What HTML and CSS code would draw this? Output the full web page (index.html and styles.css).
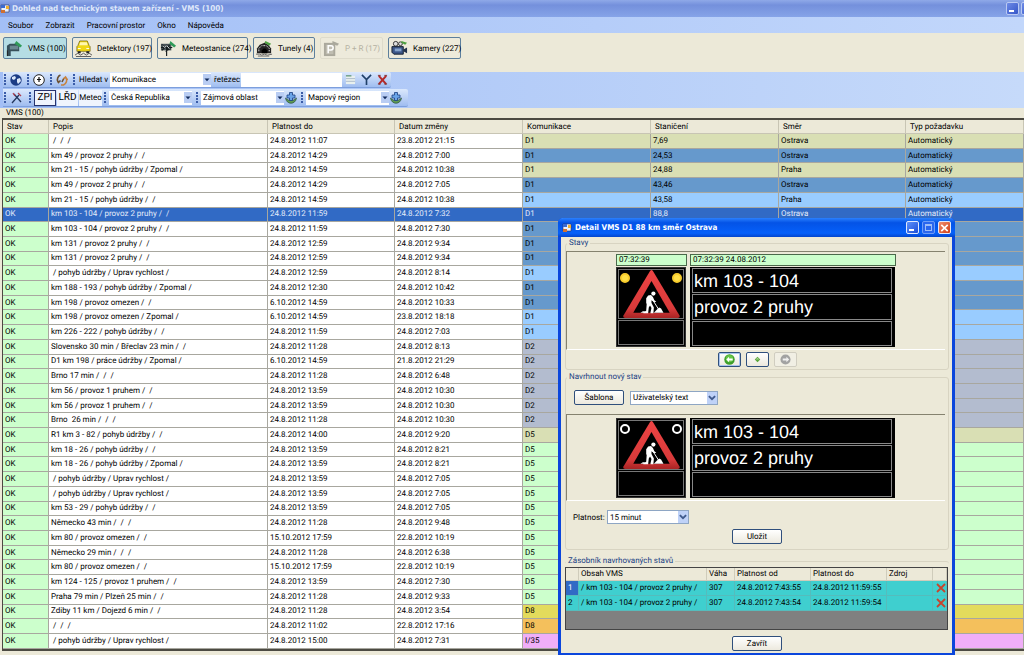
FILE: index.html
```html
<!DOCTYPE html>
<html lang="cs">
<head>
<meta charset="utf-8">
<title>Dohled nad technickým stavem zařízení - VMS (100)</title>
<link rel="stylesheet" href="styles.css">
</head>
<body>
<svg class="defs" aria-hidden="true">
  <defs>
    <linearGradient id="red" x1="0" y1="0" x2="0" y2="1"><stop offset="0" stop-color="#ee4444"/><stop offset=".8" stop-color="#d83a3a"/><stop offset="1" stop-color="#a82424"/></linearGradient>
  </defs>
  <symbol id="form" viewBox="0 0 10 10"><path fill="#e8f0ff" stroke="#335" stroke-width=".6" d="M1 1h8v7H1z"/><path fill="#3a6ad0" d="M1 1h4v3H1z"/><path fill="#f0b030" d="M6 2h3v3H6z"/><path fill="#d07030" d="M1 6h4v3H1z"/></symbol>
  <symbol id="down" viewBox="0 0 8 8"><path d="M1.500 3h5L4 5.800z" fill="#112a5c"/></symbol>
  <symbol id="chev" viewBox="0 0 8 8"><path d="M1.500 2.500 4 5l2.500-2.500" fill="none" stroke="#3f5a8c" stroke-width="1.500"/></symbol>
  <symbol id="works" viewBox="0 0 66 50">
    <path fill="url(#red)" d="M32 1q1.500-2 3 0l28 47q0 2-2 2H6q-2 0-2-2z"/><path fill="#000" d="M33.500 11.500 52.500 44.500H14.500z"/>
    <circle cx="35.500" cy="24.500" r="2.200" fill="#fff"/>
    <path fill="#fff" d="M33 26l-3 .5-2 3v5l.5 1-.5 7-3 1.500v1h5l.7-6 1.300-2 1.500 2.500-1 4.500v1h3l.5-6-2.500-4.500v-3l3 2 2-.500-2-1.500-1.500-3.500z"/>
    <path d="M34 30 41 41" stroke="#fff"/><path fill="#fff" d="M36 44.500l3-3 2.500-2.500 2 1 2.500 4.500zM22 44.500l2.500-1.500h2v1.500z"/>
  </symbol>
  <symbol id="plus" viewBox="0 0 12 12"><circle cx="6" cy="6" r="5.700" fill="#3e9f2c"/><circle cx="6" cy="5" r="4" fill="#68c648"/><path d="M2.500 6 5.500 3v2h4v2h-4v2z" fill="#fff"/></symbol>
  <symbol id="fwd" viewBox="0 0 12 12"><circle cx="6" cy="6" r="5.500" fill="#a2a2a2"/><path d="M10 6 7 3v2H3v2h4v2z" fill="#f0f0f0"/></symbol>
  <symbol id="dot" viewBox="0 0 12 12"><path d="M6 3 9 6 6 9 3 6z" fill="#5aa63a"/><path d="M6 4 8 6H4z" fill="#a8d490"/></symbol>
  <symbol id="cross" viewBox="0 0 12 12"><path d="M2 2l8 8M10 2 2 10" stroke="#c8442c" stroke-width="1.800"/></symbol>
  <symbol id="add" viewBox="0 0 12 12"><path d="M.5 6c1 7 10 7 11 0L9 8H3z" fill="#5f9a55" stroke="#28503c" stroke-width=".7"/><path d="M4.500.5h3V3H10v3H7.500v2.500h-3V6H2V3h2.500z" fill="#6aa4e8" stroke="#1a3f80" stroke-width=".8"/></symbol>
</svg>

<header class="titlebar">
  <svg class="i9"><use href="#form"/></svg>
  <h1>Dohled nad technickým stavem zařízení - VMS (100)</h1>
  <button class="win" aria-label="Minimalizovat"><i class="min"></i></button>
  <button class="win cut" aria-label="Maximalizovat"></button>
</header>
<nav class="menu">
  <button>Soubor</button><button>Zobrazit</button><button>Pracovní prostor</button><button>Okno</button><button>Nápověda</button>
</nav>

<div class="modules">
  <button class="mod w1 on"><svg viewBox="0 0 18 18"><path d="M1 6l3-2h10v8H5v5H1z" fill="#37505a"/><path d="M4 6h9v4H4z" fill="#6a8790"/><path d="M11 1l6 5-2 2-6-4z" fill="#2f9a58"/><path d="M1.500 11v6" stroke="#222"/></svg>VMS (100)</button>
  <button class="mod w2"><svg viewBox="0 0 18 18"><path d="M5 1h8l2 5 1 1v5H2V7l1-1z" fill="#f0d818" stroke="#665800" stroke-width=".7"/><path d="M5.500 2.500h7l1 3h-9z" fill="#fff7b0"/><path d="M3 9h3M12 9h3" stroke="#fff"/><path d="M3 12h3v2H3zM12 12h3v2h-3z" fill="#222"/><path d="M0 16l3-2 3 2 3-2 3 2 3-2 3 2M1 17.500h16" stroke="#555" fill="none"/></svg>Detektory (197)</button>
  <button class="mod w3"><svg viewBox="0 0 18 18"><path d="M1 4h11v7H1z" fill="#4a5558"/><path d="M2 5l3 3-3 3m5-6v12m3-12-3 6 4-2M1 8h12" stroke="#151c1e" fill="none" stroke-width="1.200"/><path d="M3 6l2 2 2-2 3 3" stroke="#dfe6e8" fill="none"/><path d="M11 1l6 5-2 2-5-4z" fill="#2f9a58"/></svg>Meteostanice (274)</button>
  <button class="mod w4"><svg viewBox="0 0 18 18"><path d="M1 14V9l3-4 5-2 4 2 3 4v5z" fill="#222"/><path d="M3 12V9l3-3h5l3 3v3" stroke="#ddd" fill="none" stroke-dasharray="2 1"/><path d="M6 14v-3l2-2h2l2 2v3z" fill="#000"/><path d="M0 15h4l2 1 3-1 3 1 5-1M2 17h12" stroke="#666" fill="none"/><path d="M10 1l6 3-2 2-5-3z" fill="#4da040"/></svg>Tunely (4)</button>
  <button class="mod w5" disabled><svg viewBox="0 0 18 18"><path d="M1 3h12v14H1z" fill="#aaa89c"/><path d="M3 5h8v10H3z" fill="#bfbdb1"/><path d="M5.500 14V6h3a2 2 0 0 1 0 4.500h-3" stroke="#fff" stroke-width="1.600" fill="none"/><path d="M10 1l7 3-2 2-5-2z" fill="#aaa89c"/></svg>P + R (17)</button>
  <button class="mod w6"><svg viewBox="0 0 18 18"><circle cx="5" cy="4" r="2.500" fill="#ddd" stroke="#333"/><circle cx="10" cy="4" r="2" fill="#ddd" stroke="#333"/><path d="M1 7h12v8H3l-2-2z" fill="#3c5688" stroke="#16202e"/><path d="M4 9h7v3H4z" fill="#86a4cc"/><path d="M13 10l4-2v6l-4-2z" fill="#24344e"/><path d="M11 1l6 2-2 2-4-2z" fill="#4da040"/></svg>Kamery (227)</button>
</div>

<div class="strips">
  <div class="strip s1">
    <span class="grip"></span>
    <button class="tool t1" aria-label="Mapa"><svg viewBox="0 0 12 12"><circle cx="6" cy="6" r="5.700" fill="#1c3c84"/><path d="M2 3l3-1 1 2-2 2-2-1zM7 5l3-1 1 3-3 3-1-2z" fill="#dbe7f8"/></svg></button>
    <span class="grip"></span>
    <button class="tool t1" aria-label="Obnovit čas"><svg viewBox="0 0 12 12"><circle cx="6" cy="6" r="5.300" fill="#fff" stroke="#222"/><path d="M6 3v5M4 5.500h4" stroke="#111" stroke-width="1.200"/></svg></button>
    <span class="grip"></span>
    <button class="tool t1" aria-label="Obnovit"><svg viewBox="0 0 12 12"><path d="M4.500 1A5 5 0 0 0 2 8M1 5.500l1.500 3 2-2M6 8l2-4" stroke="#6c5030" stroke-width="1.600" fill="none"/><path d="M7.500 11A5 5 0 0 0 10 4M11.500 6 9.500 3l-2 2M5 11H8" stroke="#c8823c" stroke-width="1.600" fill="none"/></svg></button>
    <span class="grip"></span>
    <label for="kde">Hledat v</label>
    <span class="combo c1"><select id="kde"><option>Komunikace</option></select><svg><use href="#down"/></svg></span>
    <label for="str">řetězec</label>
    <input id="str" class="find" type="text">
    <button class="tool t2" aria-label="Seznam"><svg viewBox="0 0 12 12"><path d="M1 2h10v9H1z" fill="#e8f0ee"/><path d="M1 2h6" stroke="#6a9a80" stroke-width="1.500"/><path d="M1 5h10M1 8h10" stroke="#a8b8c8"/></svg></button>
    <button class="tool t2" aria-label="Filtr"><svg viewBox="0 0 12 12"><path d="M1 1l5 5 5-5M6 6v6" stroke="#1f3f68" stroke-width="1.800" fill="none"/></svg></button>
    <button class="tool t2" aria-label="Zrušit filtr"><svg viewBox="0 0 12 12"><path d="M2 2l8 9M10 2 2 11" stroke="#b42a2a" stroke-width="2.200"/><path d="M1 1.500h3M8 1.500h3M1 11h3M8 11h3" stroke="#7a3030"/></svg></button>
  </div>
  <div class="strip s2">
    <span class="grip"></span>
    <button class="tool t3" aria-label="Nástroje"><svg viewBox="0 0 12 12"><path d="M1 11 8 3M3 2l7 8" stroke="#23365e" stroke-width="1.300"/><path d="M7 1l3 3M2 1l2 3" stroke="#b04050" stroke-width="1.300"/></svg></button>
    <span class="grip"></span>
    <button class="seg zpi">ZPI</button><button class="seg">LŘD</button><button class="seg small">Meteo</button>
    <span class="grip"></span>
    <span class="combo c2"><select aria-label="Stát"><option>Česká Republika</option></select><svg><use href="#down"/></svg></span>
    <span class="grip"></span>
    <span class="combo c3"><select aria-label="Zájmová oblast"><option>Zájmová oblast</option></select><svg><use href="#down"/></svg></span>
    <button class="tool t4" aria-label="Přidat oblast"><svg><use href="#add"/></svg></button>
    <span class="grip"></span>
    <span class="combo c3"><select aria-label="Mapový region"><option>Mapový region</option></select><svg><use href="#down"/></svg></span>
    <button class="tool t4" aria-label="Přidat region"><svg><use href="#add"/></svg></button>
  </div>
</div>

<main class="list">
  <h2>VMS (100)</h2>
  <div class="frame">
    <table class="vms">
      <colgroup><col class="k0"><col class="k1"><col class="k2"><col class="k3"><col class="k3"><col class="k3"><col class="k2"><col></colgroup>
      <thead><tr><th>Stav</th><th>Popis</th><th>Platnost do</th><th>Datum změny</th><th>Komunikace</th><th>Staničení</th><th>Směr</th><th>Typ požadavku</th></tr></thead>
      <tbody id="rows"></tbody>
    </table>
  </div>
</main>

<section class="dialog" role="dialog" aria-labelledby="dt">
  <header class="dtitle">
    <svg class="i9"><use href="#form"/></svg>
    <h2 id="dt">Detail VMS D1 88 km směr Ostrava</h2>
    <button class="win" aria-label="Minimalizovat"><i class="min"></i></button>
    <button class="win dim" aria-label="Maximalizovat"><i class="max"></i></button>
    <button class="win close" aria-label="Zavřít okno"><svg viewBox="0 0 12 12"><path d="M2.500 2.500l7 7M9.500 2.500l-7 7" stroke="#fff" stroke-width="1.800"/></svg></button>
  </header>
  <div class="dbody">
    <fieldset class="g1">
      <legend>Stavy</legend>
      <div class="panel">
        <div class="stamps"><span>07:32:39</span><span>07:32:39 24.08.2012</span></div>
        <div class="signs">
          <div class="sign"><div class="pic"><svg><use href="#works"/></svg><i class="lamp lit"></i><i class="lamp lit"></i></div><div class="blank"></div></div>
          <div class="board"><p>km 103 - 104</p><p>provoz 2 pruhy</p><p></p></div>
        </div>
      </div>
      <div class="acts">
        <button class="xp focus" aria-label="Předchozí"><svg><use href="#plus"/></svg></button>
        <button class="xp" aria-label="Převzít"><svg><use href="#dot"/></svg></button>
        <button class="xp" disabled aria-label="Další"><svg><use href="#fwd"/></svg></button>
      </div>
    </fieldset>
    <fieldset class="g2">
      <legend>Navrhnout nový stav</legend>
      <div class="line">
        <button class="xp wide">Šablona</button>
        <span class="combo xpc"><select aria-label="Typ textu"><option>Uživatelský text</option></select><svg><use href="#chev"/></svg></span>
      </div>
      <div class="panel">
        <div class="signs">
          <div class="sign"><div class="pic"><svg><use href="#works"/></svg><i class="lamp"></i><i class="lamp"></i></div><div class="blank"></div></div>
          <div class="board"><p>km 103 - 104</p><p>provoz 2 pruhy</p><p></p></div>
        </div>
      </div>
      <div class="line valid">
        <label for="plat">Platnost:</label>
        <span class="combo xpc short"><select id="plat"><option>15 minut</option></select><svg><use href="#chev"/></svg></span>
      </div>
      <div class="center"><button class="xp wide">Uložit</button></div>
    </fieldset>
    <fieldset class="g3">
      <legend>Zásobník navrhovaných stavů</legend>
      <div class="stack">
        <table>
          <colgroup><col class="q0"><col class="q1"><col class="q2"><col class="q3"><col class="q3"><col class="q4"><col></colgroup>
          <thead><tr><th></th><th>Obsah VMS</th><th>Váha</th><th>Platnost od</th><th>Platnost do</th><th>Zdroj</th><th></th></tr></thead>
          <tbody>
            <tr><td class="cur">1</td><td>/ km 103 - 104 / provoz 2 pruhy /</td><td>307</td><td>24.8.2012 7:43:55</td><td>24.8.2012 11:59:55</td><td></td><td><button class="del" aria-label="Smazat 1"><svg><use href="#cross"/></svg></button></td></tr>
            <tr><td>2</td><td>/ km 103 - 104 / provoz 2 pruhy /</td><td>307</td><td>24.8.2012 7:43:54</td><td>24.8.2012 11:59:54</td><td></td><td><button class="del" aria-label="Smazat 2"><svg><use href="#cross"/></svg></button></td></tr>
          </tbody>
        </table>
      </div>
    </fieldset>
    <div class="center"><button class="xp wide">Zavřít</button></div>
  </div>
</section>
<script src="app.js"></script>
</body>
</html>
```

FILE: styles.css
```css
* { box-sizing: border-box; }
body, button, input, select, legend, label, th, td {
  font-family: Roboto, "Liberation Sans", Arial, sans-serif;
  font-size: 8px;
  color: #000;
  text-rendering: geometricPrecision;
}
body { margin: 0; height: 100vh; overflow: hidden; display: flex; flex-direction: column; background: #ece9d8; position: relative; }
h1, h2, p { margin: 0; }
button { margin: 0; padding: 0; border: 0; background: none; display: flex; align-items: center; justify-content: center; }
.defs { position: absolute; width: 0; height: 0; }
.i9 { width: 10px; height: 10px; flex: none; }

.titlebar { height: 17px; flex: none; display: flex; align-items: center; background: linear-gradient(#8fa9e8, #7490dc 30%, #86a4e8); overflow: hidden; }
.titlebar h1, .dtitle h2 { flex: 1; font: bold 8px/12px "DejaVu Sans Condensed", "DejaVu Sans", sans-serif; color: #dfe8fa; white-space: nowrap; }
.titlebar h1 { padding-left: 2px; }
.win { width: 13px; height: 13px; flex: none; border: 1px solid #b9c9f3; border-radius: 2px; background: linear-gradient(135deg, #6d8ae6, #3556c8); align-items: flex-end; justify-content: flex-start; padding: 2px; }
.titlebar .win { margin-right: 2px; }
.titlebar .cut { margin-right: -10px; }
.min { width: 5px; height: 2px; background: #fff; }
.max { width: 7px; height: 7px; border: 1px solid #9dbcf8; border-top-width: 2px; }
.win svg { width: 12px; height: 12px; }

.menu { height: 16px; flex: none; display: flex; align-items: center; gap: 12px; padding-left: 8px; background: linear-gradient(90deg, #a3bff6, #c2d7fb); }

.modules { height: 39px; flex: none; display: flex; gap: 5px; padding: 4px 3px 0; }
.mod { height: 22px; justify-content: flex-start; gap: 5px; padding-left: 2px; border: 1px solid #5d7f9c; border-radius: 2px; white-space: nowrap; background: #edeadb; }
.mod svg { width: 17px; height: 17px; flex: none; }
.mod.on { background: #b5dde4; }
.mod:disabled { color: #b4b1a2; border-color: #dedbcb; }
.w1 { width: 64px; } .w2 { width: 80px; } .w3 { width: 91px; } .w4 { width: 62px; } .w5 { width: 63px; } .w6 { width: 73px; }

.strips { height: 36px; flex: none; display: flex; flex-direction: column; gap: 1px; padding-left: 3px; background: linear-gradient(90deg, #a3bff6, #c6dafa); }
.strip { display: flex; align-items: center; align-self: flex-start; height: 16px; background: linear-gradient(#dbe8fc, #9fbdf0); border-radius: 0 2px 2px 0; border-bottom: 1px solid #7d9fdc; padding-right: 1px; }
.s2 { height: 18px; padding-right: 3px; }
.grip { width: 3px; height: 12px; margin: 0 2px 0 1px; background: repeating-linear-gradient(#3a5ca8 0 2px, transparent 2px 3px) 0 0 / 2px 100% no-repeat; }
.tool svg { width: 12px; height: 12px; }
.t1 { width: 13px; height: 14px; margin-right: 4px; }
.t2 { width: 16px; height: 14px; }
.t2 svg { width: 11px; height: 11px; }
.t3 { width: 16px; height: 16px; margin-right: 3px; }
.t4 { width: 14px; height: 16px; margin-right: 2px; }
.combo { display: flex; align-items: center; background: #fff; height: 14px; }
.combo select { appearance: none; flex: 1; min-width: 0; width: 100%; height: 100%; border: 0; margin: 0; padding: 0 2px; background: none; }
.combo svg { width: 8px; height: 11px; flex: none; background: #b9cdf3; pointer-events: none; }
.strip label { width: 32px; padding: 0 0 0 1px; white-space: nowrap; }
.c1 { width: 101px; }
.strip .c1 + label { width: 30px; padding-left: 3px; }
.find { width: 101px; height: 14px; border: 0; padding: 0 2px; background: #fff; }
.c2 { width: 83px; margin-right: 3px; } .c3 { width: 83px; }
.seg { width: 21px; height: 16px; font-size: 10px; background: #eff4fd; margin-right: 1px; }
.seg.zpi { width: 22px; border: 1px solid #27336e; }
.seg.small { width: 23px; font-size: 8px; }

.list { flex: 1; min-height: 0; display: flex; flex-direction: column; padding: 0 0 4px 2px; }
.list > h2 { font: 8px/10px Roboto, "Liberation Sans", Arial, sans-serif; padding-left: 4px; }
.frame { flex: 1; min-height: 0; border: solid #4c4a42; border-width: 2px 0 2px 1px; }
.vms { width: 100%; height: 100%; table-layout: fixed; border-collapse: separate; border-spacing: 0; background: #fff; }
.k0 { width: 46px; } .k1 { width: 219px; } .k2 { width: 127px; } .k3 { width: 128px; }
.vms th, .vms td { padding: 0 2px; text-align: left; font-weight: normal; line-height: 12px; white-space: pre; overflow: hidden; border: solid #a8a79f; border-width: 0 1px 1px 0; }
.vms th { height: 14px; padding-left: 4px; background: #ece9d8; border-color: #c8c5b4; }
.vms td:first-child { background: #ccffcc; }
.tan td:nth-child(n+5) { background: #d9dfb4; }
.steel td:nth-child(n+5) { background: #6699cc; }
.sky td:nth-child(n+5) { background: #99ccff; }
.gray td:nth-child(n+5) { background: #b3bccf; }
.green td:nth-child(n+5) { background: #ccffcc; }
.yellow td:nth-child(n+5) { background: #e3db5c; }
.orange td:nth-child(n+5) { background: #f4c05c; }
.pink td:nth-child(n+5) { background: #f0aef8; }
.vms .sel td { background: #316ac5; color: #e4ecfa; }

.dialog { position: absolute; left: 558px; top: 218px; width: 397px; background: #ece9d8; border: solid #0b46dc; border-width: 0 3px 3px; border-radius: 5px 5px 0 0; }
.dtitle { height: 19px; margin: 0 -3px; padding: 0 4px; display: flex; align-items: center; gap: 3px; border-radius: 5px 5px 0 0; background: linear-gradient(#2a80ff, #0453e6 25%, #0560fa 80%, #0345cc); }
.dtitle h2 { color: #fff; }
.dtitle .win { background: linear-gradient(135deg, #5c90fa, #1c4ed8); border-color: #dfe8fc; }
.dtitle .dim { border-color: #6d9cf8; background: #2a66ee; }
.dtitle .close { background: linear-gradient(135deg, #f09070, #d03c14); padding: 0; align-items: center; justify-content: center; }
.dbody { padding: 1px 3px 2px 4px; }
fieldset { min-width: 0; margin: 0; padding: 0; border: 1px solid #d8d4c2; border-radius: 3px; }
legend { color: #1c4284; line-height: 10px; padding: 0 2px; margin-left: 1px; }
.panel { border: solid #85826f; border-width: 1px 0 0 1px; border-bottom: 1px solid #fff; padding: 2px 0 2px 49px; margin: 0 3px 0 0; }
.g1 .panel { margin-top: 3px; }
.stamps { display: flex; gap: 3px; }
.stamps span { height: 12px; line-height: 10px; padding-left: 2px; background: #ccffcc; border: 1px solid #4b6a4b; }
.stamps span:first-child { width: 71px; }
.stamps span:last-child { width: 206px; }
.signs { display: flex; gap: 4px; margin-top: 1px; }
.sign { width: 70px; height: 80px; background: #000; border: 1px solid #333; padding: 1px; display: flex; flex-direction: column; gap: 1px; }
.pic { flex: 1; border: 1px solid #777; display: flex; align-items: flex-start; justify-content: space-between; position: relative; padding: 3px 1px; }
.pic svg { position: absolute; left: 0; top: 0; width: 100%; height: 100%; }
.lamp { width: 10px; height: 10px; border-radius: 50%; border: 2px solid #fff; position: relative; }
.lamp.lit { background: #ffe048; border-color: #f8cc2c; }
.blank { height: 25px; border: 1px solid #777; }
.board { width: 205px; background: #000; padding: 1px 3px 1px 2px; display: flex; flex-direction: column; gap: 1px; }
.board p { flex: 1 1 0; min-height: 0; border: 1px solid #888; color: #fff; font: 18px/24px "Liberation Sans", Arial, sans-serif; padding-left: 1px; white-space: nowrap; }
.acts { display: flex; justify-content: center; gap: 5px; padding: 2px 0; }
.xp { width: 23px; height: 15px; border: 1px solid #2f4f7c; border-radius: 2px; background: linear-gradient(#fff, #ece9de); }
.xp svg { width: 11px; height: 11px; }
.xp.focus { box-shadow: inset 0 0 0 1px #a8c4f0; }
.xp:disabled { border-color: #d0cdc0; background: #f1efe4; }
.wide { width: 50px; }
.g2 { margin-top: 2px; }
.line { display: flex; align-items: center; gap: 6px; padding: 8px 0 9px 8px; }
.xpc { width: 88px; height: 14px; border: 1px solid #8ea6c4; }
.xpc.short { width: 82px; }
.xpc svg { width: 10px; height: 12px; background: #bfd2f8; }
.valid { gap: 2px; padding: 9px 0 5px 7px; }
.valid label { width: 32px; }
.center { display: flex; justify-content: center; }
.g2 .center { padding-bottom: 5px; }
.g3 { margin-top: 6px; border-width: 1px 0 0; }
.stack { height: 63px; border: 1px solid #444; background: #808080; margin: 1px 1px 0 0; }
.stack table { width: 100%; table-layout: fixed; border-spacing: 0; }
.stack th, .stack td { height: 15px; padding: 0 2px; line-height: 12px; text-align: left; font-weight: normal; white-space: nowrap; border: solid #55bcbc; border-width: 0 1px 1px 0; background: #3fcfcf; }
.stack th { height: 13px; background: #ece9d8; border-color: #cfccbb; }
.stack .cur { background: #316ac5; color: #fff; }
.q0 { width: 13px; } .q1 { width: 128px; } .q2 { width: 28px; } .q3 { width: 76px; } .q4 { width: 46px; }
.del svg { width: 12px; height: 12px; }
.dbody > .center { margin-top: 6px; }
```

FILE: app.js
```js
const rows = [
  [" /  /  /", "24.8.2012 11:07", "23.8.2012 21:15", "D1", "tan", "7,69", "Ostrava"],
  ["km 49 / provoz 2 pruhy /  /", "24.8.2012 14:29", "24.8.2012 7:00", "D1", "steel", "24,53", "Ostrava"],
  ["km 21 - 15 / pohyb údržby / Zpomal /", "24.8.2012 14:59", "24.8.2012 10:38", "D1", "tan", "24,88", "Praha"],
  ["km 49 / provoz 2 pruhy /  /", "24.8.2012 14:29", "24.8.2012 7:05", "D1", "steel", "43,46", "Ostrava"],
  ["km 21 - 15 / pohyb údržby /  /", "24.8.2012 14:59", "24.8.2012 10:38", "D1", "sky", "43,58", "Praha"],
  ["km 103 - 104 / provoz 2 pruhy /  /", "24.8.2012 11:59", "24.8.2012 7:32", "D1", "sel", "88,8", "Ostrava"],
  ["km 103 - 104 / provoz 2 pruhy /  /", "24.8.2012 11:59", "24.8.2012 7:30", "D1", "steel"],
  ["km 131 / provoz 2 pruhy /  /", "24.8.2012 12:59", "24.8.2012 9:34", "D1", "steel"],
  ["km 131 / provoz 2 pruhy /  /", "24.8.2012 12:59", "24.8.2012 9:34", "D1", "steel"],
  [" / pohyb údržby / Uprav rychlost /", "24.8.2012 12:59", "24.8.2012 8:14", "D1", "sky"],
  ["km 188 - 193 / pohyb údržby / Zpomal /", "24.8.2012 12:30", "24.8.2012 10:42", "D1", "steel"],
  ["km 198 / provoz omezen /  /", "6.10.2012 14:59", "24.8.2012 10:33", "D1", "steel"],
  ["km 198 / provoz omezen / Zpomal /", "6.10.2012 14:59", "23.8.2012 18:18", "D1", "sky"],
  ["km 226 - 222 / pohyb údržby /  /", "24.8.2012 11:59", "24.8.2012 7:03", "D1", "sky"],
  ["Slovensko 30 min / Břeclav 23 min /  /", "24.8.2012 11:28", "24.8.2012 8:13", "D2", "gray"],
  ["D1 km 198 / práce údržby / Zpomal /", "6.10.2012 14:59", "21.8.2012 21:29", "D2", "gray"],
  ["Brno 17 min /  /  /", "24.8.2012 11:28", "24.8.2012 6:48", "D2", "gray"],
  ["km 56 / provoz 1 pruhem /  /", "24.8.2012 13:59", "24.8.2012 10:30", "D2", "gray"],
  ["km 56 / provoz 1 pruhem /  /", "24.8.2012 13:59", "24.8.2012 10:30", "D2", "gray"],
  ["Brno  26 min /  /  /", "24.8.2012 11:28", "24.8.2012 10:30", "D2", "gray"],
  ["R1 km 3 - 82 / pohyb údržby /  /", "24.8.2012 14:00", "24.8.2012 9:20", "D5", "tan"],
  ["km 18 - 26 / pohyb údržby /  /", "24.8.2012 13:59", "24.8.2012 8:21", "D5", "green"],
  ["km 18 - 26 / pohyb údržby / Zpomal /", "24.8.2012 13:59", "24.8.2012 8:21", "D5", "green"],
  [" / pohyb údržby / Uprav rychlost /", "24.8.2012 13:59", "24.8.2012 7:05", "D5", "green"],
  [" / pohyb údržby / Uprav rychlost /", "24.8.2012 13:59", "24.8.2012 7:05", "D5", "green"],
  ["km 53 - 29 / pohyb údržby /  /", "24.8.2012 13:59", "24.8.2012 7:05", "D5", "green"],
  ["Německo 43 min /  /  /", "24.8.2012 11:28", "24.8.2012 9:48", "D5", "green"],
  ["km 80 / provoz omezen /  /", "15.10.2012 17:59", "22.8.2012 10:19", "D5", "green"],
  ["Německo 29 min /  /  /", "24.8.2012 11:28", "24.8.2012 6:38", "D5", "green"],
  ["km 80 / provoz omezen /  /", "15.10.2012 17:59", "22.8.2012 10:19", "D5", "green"],
  ["km 124 - 125 / provoz 1 pruhem /  /", "24.8.2012 13:59", "24.8.2012 7:30", "D5", "green"],
  ["Praha 79 min / Plzeň 25 min /  /", "24.8.2012 11:28", "24.8.2012 9:33", "D5", "green"],
  ["Zdiby 11 km / Dojezd 6 min /  /", "24.8.2012 11:28", "24.8.2012 3:54", "D8", "yellow"],
  [" /  /  /", "24.8.2012 11:02", "22.8.2012 17:16", "D8", "orange"],
  [" / pohyb údržby / Uprav rychlost /", "24.8.2012 15:00", "24.8.2012 7:31", "I/35", "pink"]
];
const body = document.getElementById("rows");
for (const [text, until, changed, road, tone, km = "", dir = ""] of rows) {
  const tr = body.insertRow();
  tr.className = tone;
  for (const value of ["OK", text, until, changed, road, km, dir, dir ? "Automatický" : ""]) {
    tr.insertCell().textContent = value;
  }
}
```
